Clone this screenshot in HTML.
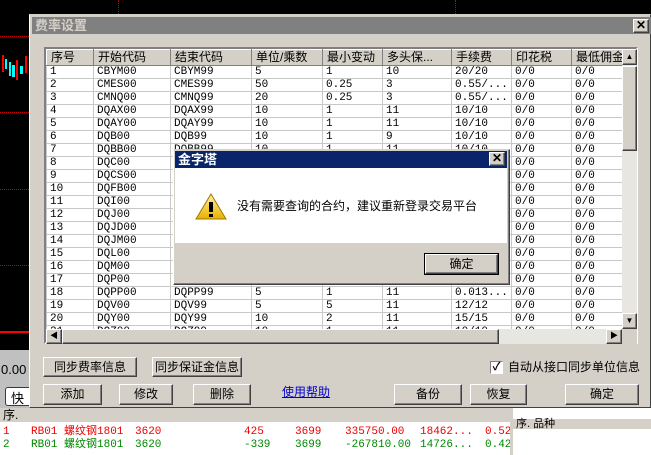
<!DOCTYPE html>
<html><head><meta charset="utf-8"><style>
*{margin:0;padding:0;box-sizing:border-box}
body{width:651px;height:455px;background:#000;position:relative;overflow:hidden;font-family:"Liberation Sans","Noto Sans CJK SC",sans-serif;font-size:12px;color:#000}
.a{position:absolute}
.btn{position:absolute;background:#d4d0c8;border:1px solid;border-color:#fff #404040 #404040 #fff;box-shadow:inset -1px -1px 0 #808080;text-align:center;font-size:12px;line-height:18px}
table{border-collapse:collapse;table-layout:fixed;position:absolute}
td{border:1px solid #c8c8c8;height:13px;font-family:"Liberation Mono","Noto Sans CJK SC",monospace;font-size:11px;line-height:11px;padding:0 0 0 3px;white-space:nowrap;overflow:hidden;background:#fff}
.hd td{background:#d4d0c8;border:1px solid;border-color:#fff #808080 #808080 #fff;height:16px;font-family:"Liberation Sans","Noto Sans CJK SC",sans-serif;font-size:12px;padding-left:4px}
.dot{position:absolute;border-top:1px dotted #c00;height:0}
</style></head><body>
<!-- background chart -->
<div class="dot" style="left:0;top:36px;width:29px"></div>
<div class="dot" style="left:0;top:112px;width:29px"></div>
<div class="dot" style="left:0;top:189px;width:29px"></div>
<div class="dot" style="left:0;top:265px;width:29px"></div>
<div class="a" style="left:118px;top:0;height:14px;border-left:1px dotted #c00"></div>
<div class="a" style="left:455px;top:0;height:14px;border-left:1px dotted #c00"></div>
<div class="a" style="left:2px;top:55px;width:2px;height:17px;background:#f00"></div>
<div class="a" style="left:5px;top:59px;width:2px;height:10px;background:#0ff"></div>
<div class="a" style="left:9px;top:62px;width:2px;height:14px;background:#0ff"></div>
<div class="a" style="left:12px;top:65px;width:3px;height:12px;background:#0ff"></div>
<div class="a" style="left:16px;top:60px;width:2px;height:20px;background:#f00"></div>
<div class="a" style="left:20px;top:66px;width:3px;height:8px;background:#0ff"></div>
<div class="a" style="left:25px;top:56px;width:2px;height:17px;background:#f00"></div>
<div class="a" style="left:0;top:331px;width:29px;height:2px;background:#f00"></div>
<div class="a" style="left:0;top:350px;width:29px;height:58px;background:#c0c0c0"></div>
<div class="a" style="left:1px;top:362px;font-size:13px">0.00</div>
<div class="a" style="left:5px;top:387px;width:30px;height:19px;background:#fff;border:1px solid #336;border-radius:3px;padding-left:5px;font-size:13px">快</div>
<!-- bottom table -->
<div class="a" style="left:0;top:408px;width:510px;height:47px;background:#fff"></div>
<div class="a" style="left:0;top:408px;width:510px;height:14px;background:#d4d0c8;font-size:12px;line-height:14px;padding-left:3px">序.</div>
<div class="a" style="left:0;top:426px;width:510px;font-family:'Liberation Mono','Noto Sans CJK SC',monospace;font-size:11px;color:#e00;line-height:12px">
<span class="a" style="left:3px">1</span><span class="a" style="left:31px">RB01 螺纹钢1801</span><span class="a" style="left:135px">3620</span><span class="a" style="left:244px">425</span><span class="a" style="left:295px">3699</span><span class="a" style="left:345px">335750.00</span><span class="a" style="left:420px">18462...</span><span class="a" style="left:485px">0.52</span></div>
<div class="a" style="left:0;top:439px;width:510px;font-family:'Liberation Mono','Noto Sans CJK SC',monospace;font-size:11px;color:#080;line-height:12px">
<span class="a" style="left:3px">2</span><span class="a" style="left:31px">RB01 螺纹钢1801</span><span class="a" style="left:135px">3620</span><span class="a" style="left:244px">-339</span><span class="a" style="left:295px">3699</span><span class="a" style="left:345px">-267810.00</span><span class="a" style="left:420px">14726...</span><span class="a" style="left:485px">0.42</span></div>
<div class="a" style="left:510px;top:408px;width:3px;height:47px;background:#d4d0c8"></div>
<div class="a" style="left:513px;top:408px;width:138px;height:47px;background:#fff"></div>
<div class="a" style="left:513px;top:419px;width:138px;height:10px;background:#d4d0c8;font-size:11px;line-height:10px;padding-left:3px">序. 品种</div>

<!-- main dialog -->
<div class="a" style="left:29px;top:14px;width:622px;height:394px;background:#d4d0c8;border:1px solid;border-color:#d4d0c8 #404040 #404040 #fff"></div>
<div class="a" style="left:32px;top:17px;width:619px;height:17px;background:#808080;color:#d4d0c8;font-weight:bold;font-size:13px;line-height:17px;padding-left:3px">费率设置</div>
<div class="btn" style="left:633px;top:19px;width:16px;height:14px;line-height:11px;font-size:12px;font-weight:bold">✕</div>
<div class="a" style="left:44px;top:47px;width:594px;height:297px;border:2px solid;border-color:#808080 #fff #fff #808080;background:#fff"></div>
<table style="left:46px;top:49px;width:576px">
<colgroup><col style="width:47px"><col style="width:77px"><col style="width:81px"><col style="width:71px"><col style="width:60px"><col style="width:69px"><col style="width:60px"><col style="width:60px"><col style="width:51px"></colgroup>
<tr class="hd"><td>序号</td><td>开始代码</td><td>结束代码</td><td>单位/乘数</td><td>最小变动</td><td>多头保...</td><td>手续费</td><td>印花税</td><td>最低佣金</td></tr>
<tr><td>1</td><td>CBYM00</td><td>CBYM99</td><td>5</td><td>1</td><td>10</td><td>20/20</td><td>0/0</td><td>0/0</td></tr>
<tr><td>2</td><td>CMES00</td><td>CMES99</td><td>50</td><td>0.25</td><td>3</td><td>0.55/...</td><td>0/0</td><td>0/0</td></tr>
<tr><td>3</td><td>CMNQ00</td><td>CMNQ99</td><td>20</td><td>0.25</td><td>3</td><td>0.55/...</td><td>0/0</td><td>0/0</td></tr>
<tr><td>4</td><td>DQAX00</td><td>DQAX99</td><td>10</td><td>1</td><td>11</td><td>10/10</td><td>0/0</td><td>0/0</td></tr>
<tr><td>5</td><td>DQAY00</td><td>DQAY99</td><td>10</td><td>1</td><td>11</td><td>10/10</td><td>0/0</td><td>0/0</td></tr>
<tr><td>6</td><td>DQB00</td><td>DQB99</td><td>10</td><td>1</td><td>9</td><td>10/10</td><td>0/0</td><td>0/0</td></tr>
<tr><td>7</td><td>DQBB00</td><td>DQBB99</td><td>10</td><td>1</td><td>11</td><td>10/10</td><td>0/0</td><td>0/0</td></tr>
<tr><td>8</td><td>DQC00</td><td>DQC99</td><td>10</td><td>1</td><td>11</td><td>10/10</td><td>0/0</td><td>0/0</td></tr>
<tr><td>9</td><td>DQCS00</td><td>DQCS99</td><td>10</td><td>1</td><td>11</td><td>10/10</td><td>0/0</td><td>0/0</td></tr>
<tr><td>10</td><td>DQFB00</td><td>DQFB99</td><td>10</td><td>1</td><td>11</td><td>10/10</td><td>0/0</td><td>0/0</td></tr>
<tr><td>11</td><td>DQI00</td><td>DQI99</td><td>10</td><td>1</td><td>11</td><td>10/10</td><td>0/0</td><td>0/0</td></tr>
<tr><td>12</td><td>DQJ00</td><td>DQJ99</td><td>10</td><td>1</td><td>11</td><td>10/10</td><td>0/0</td><td>0/0</td></tr>
<tr><td>13</td><td>DQJD00</td><td>DQJD99</td><td>10</td><td>1</td><td>11</td><td>10/10</td><td>0/0</td><td>0/0</td></tr>
<tr><td>14</td><td>DQJM00</td><td>DQJM99</td><td>10</td><td>1</td><td>11</td><td>10/10</td><td>0/0</td><td>0/0</td></tr>
<tr><td>15</td><td>DQL00</td><td>DQL99</td><td>10</td><td>1</td><td>11</td><td>10/10</td><td>0/0</td><td>0/0</td></tr>
<tr><td>16</td><td>DQM00</td><td>DQM99</td><td>10</td><td>1</td><td>11</td><td>10/10</td><td>0/0</td><td>0/0</td></tr>
<tr><td>17</td><td>DQP00</td><td>DQP99</td><td>10</td><td>2</td><td>11</td><td>10/10</td><td>0/0</td><td>0/0</td></tr>
<tr><td>18</td><td>DQPP00</td><td>DQPP99</td><td>5</td><td>1</td><td>11</td><td>0.013...</td><td>0/0</td><td>0/0</td></tr>
<tr><td>19</td><td>DQV00</td><td>DQV99</td><td>5</td><td>5</td><td>11</td><td>12/12</td><td>0/0</td><td>0/0</td></tr>
<tr><td>20</td><td>DQY00</td><td>DQY99</td><td>10</td><td>2</td><td>11</td><td>15/15</td><td>0/0</td><td>0/0</td></tr>
<tr><td>21</td><td>DQZ00</td><td>DQZ99</td><td>10</td><td>1</td><td>11</td><td>10/10</td><td>0/0</td><td>0/0</td></tr>
</table>
<!-- vertical scrollbar -->
<div class="a" style="left:622px;top:49px;width:15px;height:280px;background:#e8e6e0"></div>
<div class="btn" style="left:622px;top:49px;width:15px;height:16px;line-height:13px;font-size:8px">▲</div>
<div class="btn" style="left:622px;top:66px;width:15px;height:85px"></div>
<div class="btn" style="left:622px;top:313px;width:15px;height:16px;line-height:13px;font-size:8px">▼</div>
<!-- horizontal scrollbar -->
<div class="a" style="left:46px;top:329px;width:576px;height:15px;background:#e8e6e0"></div>
<div class="btn" style="left:46px;top:329px;width:16px;height:15px;line-height:12px;font-size:8px">◀</div>
<div class="btn" style="left:62px;top:329px;width:437px;height:15px"></div>
<div class="btn" style="left:606px;top:329px;width:16px;height:15px;line-height:12px;font-size:8px">▶</div>
<div class="a" style="left:622px;top:329px;width:15px;height:15px;background:#d4d0c8"></div>
<!-- buttons -->
<div class="btn" style="left:43px;top:357px;width:94px;height:20px">同步费率信息</div>
<div class="btn" style="left:152px;top:357px;width:90px;height:20px">同步保证金信息</div>
<div class="a" style="left:490px;top:361px;width:13px;height:13px;background:#fff;border:1px solid;border-color:#808080 #fff #fff #808080;font-size:11px;line-height:11px;text-align:center;font-weight:bold">✓</div>
<div class="a" style="left:508px;top:359px;font-size:12px;line-height:16px">自动从接口同步单位信息</div>
<div class="btn" style="left:43px;top:384px;width:59px;height:21px">添加</div>
<div class="btn" style="left:119px;top:384px;width:54px;height:21px">修改</div>
<div class="btn" style="left:193px;top:384px;width:58px;height:21px">删除</div>
<div class="a" style="left:282px;top:384px;color:#00c;text-decoration:underline;line-height:16px">使用帮助</div>
<div class="btn" style="left:394px;top:384px;width:68px;height:21px">备份</div>
<div class="btn" style="left:470px;top:384px;width:57px;height:21px">恢复</div>
<div class="btn" style="left:565px;top:384px;width:74px;height:21px">确定</div>

<!-- message box -->
<div class="a" style="left:173px;top:149px;width:337px;height:136px;background:#d4d0c8;border:1px solid;border-color:#d4d0c8 #404040 #404040 #fff;box-shadow:inset -1px -1px 0 #808080"></div>
<div class="a" style="left:175px;top:151px;width:332px;height:17px;background:#0a246a;color:#fff;font-weight:bold;font-size:13px;line-height:17px;padding-left:3px">金字塔</div>
<div class="btn" style="left:489px;top:152px;width:16px;height:14px;line-height:11px;font-size:12px;font-weight:bold">✕</div>
<div class="a" style="left:175px;top:168px;width:332px;height:75px;background:#fff"></div>
<svg class="a" style="left:195px;top:193px" width="32" height="28" viewBox="0 0 32 28">
<defs><linearGradient id="g" x1="0" y1="0" x2="0" y2="1"><stop offset="0" stop-color="#fff3a0"/><stop offset="1" stop-color="#e8b000"/></linearGradient></defs>
<path d="M16 1 L31 26 L1 26 Z" fill="url(#g)" stroke="#a07800" stroke-width="1"/>
<rect x="14" y="9" width="4" height="10" fill="#000"/><rect x="14" y="21" width="4" height="3" fill="#000"/></svg>
<div class="a" style="left:237px;top:198px;font-size:12px;line-height:16px">没有需要查询的合约，建议重新登录交易平台</div>
<div class="a" style="left:424px;top:253px;width:75px;height:22px;border:1px solid #000"></div>
<div class="btn" style="left:425px;top:254px;width:73px;height:20px">确定</div>
</body></html>
